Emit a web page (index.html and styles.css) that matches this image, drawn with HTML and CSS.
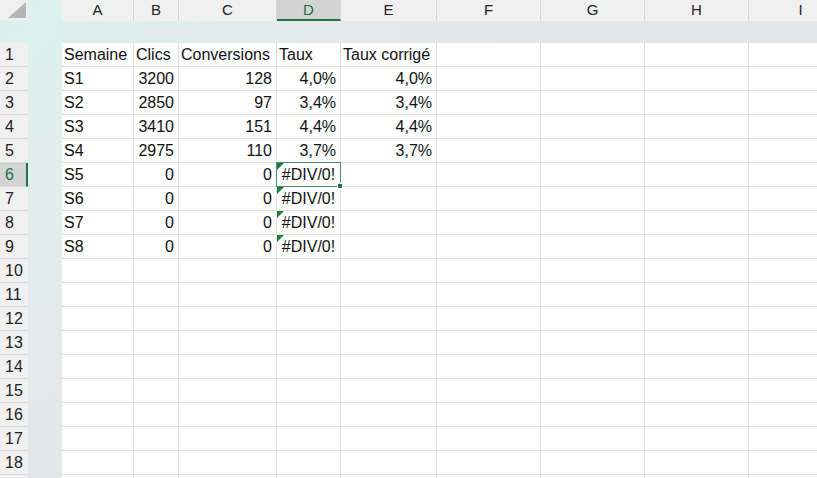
FILE: index.html
```html
<!DOCTYPE html>
<html lang="fr">
<head>
<meta charset="UTF-8">
<title>Feuil1</title>
<link rel="stylesheet" href="styles.css">
</head>
<body>

<div class="sheet">
    <!-- column letters -->
    <div class="row cols">
        <div class="corner">
            <svg width="28" height="20" viewBox="0 0 28 20"><polygon points="26,2 26,18 8,18" fill="#b4b4b4"/></svg>
        </div>
        <div class="gap"></div>
        <div class="ch">A</div>
        <div class="ch">B</div>
        <div class="ch">C</div>
        <div class="ch act">D</div>
        <div class="ch">E</div>
        <div class="ch">F</div>
        <div class="ch">G</div>
        <div class="ch">H</div>
        <div class="ch">I</div>
    </div>

    <div class="band"></div>

    <div class="row">
        <div class="rh">1</div><div class="gap"></div>
        <div class="cell">Semaine</div><div class="cell">Clics</div><div class="cell">Conversions</div><div class="cell">Taux</div><div class="cell">Taux corrigé</div>
        <div class="cell"></div><div class="cell"></div><div class="cell"></div><div class="cell"></div>
    </div>
    <div class="row">
        <div class="rh">2</div><div class="gap"></div>
        <div class="cell">S1</div><div class="cell num">3200</div><div class="cell num">128</div><div class="cell num">4,0%</div><div class="cell num">4,0%</div>
        <div class="cell"></div><div class="cell"></div><div class="cell"></div><div class="cell"></div>
    </div>
    <div class="row">
        <div class="rh">3</div><div class="gap"></div>
        <div class="cell">S2</div><div class="cell num">2850</div><div class="cell num">97</div><div class="cell num">3,4%</div><div class="cell num">3,4%</div>
        <div class="cell"></div><div class="cell"></div><div class="cell"></div><div class="cell"></div>
    </div>
    <div class="row">
        <div class="rh">4</div><div class="gap"></div>
        <div class="cell">S3</div><div class="cell num">3410</div><div class="cell num">151</div><div class="cell num">4,4%</div><div class="cell num">4,4%</div>
        <div class="cell"></div><div class="cell"></div><div class="cell"></div><div class="cell"></div>
    </div>
    <div class="row">
        <div class="rh">5</div><div class="gap"></div>
        <div class="cell">S4</div><div class="cell num">2975</div><div class="cell num">110</div><div class="cell num">3,7%</div><div class="cell num">3,7%</div>
        <div class="cell"></div><div class="cell"></div><div class="cell"></div><div class="cell"></div>
    </div>
    <div class="row">
        <div class="rh act">6</div><div class="gap"></div>
        <div class="cell">S5</div><div class="cell num">0</div><div class="cell num">0</div><div class="cell err sel">#DIV/0!<span class="fill"></span></div><div class="cell"></div>
        <div class="cell"></div><div class="cell"></div><div class="cell"></div><div class="cell"></div>
    </div>
    <div class="row">
        <div class="rh">7</div><div class="gap"></div>
        <div class="cell">S6</div><div class="cell num">0</div><div class="cell num">0</div><div class="cell err">#DIV/0!</div><div class="cell"></div>
        <div class="cell"></div><div class="cell"></div><div class="cell"></div><div class="cell"></div>
    </div>
    <div class="row">
        <div class="rh">8</div><div class="gap"></div>
        <div class="cell">S7</div><div class="cell num">0</div><div class="cell num">0</div><div class="cell err">#DIV/0!</div><div class="cell"></div>
        <div class="cell"></div><div class="cell"></div><div class="cell"></div><div class="cell"></div>
    </div>
    <div class="row">
        <div class="rh">9</div><div class="gap"></div>
        <div class="cell">S8</div><div class="cell num">0</div><div class="cell num">0</div><div class="cell err">#DIV/0!</div><div class="cell"></div>
        <div class="cell"></div><div class="cell"></div><div class="cell"></div><div class="cell"></div>
    </div>
    <div class="row">
        <div class="rh">10</div><div class="gap"></div>
        <div class="cell"></div><div class="cell"></div><div class="cell"></div><div class="cell"></div><div class="cell"></div>
        <div class="cell"></div><div class="cell"></div><div class="cell"></div><div class="cell"></div>
    </div>
    <div class="row">
        <div class="rh">11</div><div class="gap"></div>
        <div class="cell"></div><div class="cell"></div><div class="cell"></div><div class="cell"></div><div class="cell"></div>
        <div class="cell"></div><div class="cell"></div><div class="cell"></div><div class="cell"></div>
    </div>
    <div class="row">
        <div class="rh">12</div><div class="gap"></div>
        <div class="cell"></div><div class="cell"></div><div class="cell"></div><div class="cell"></div><div class="cell"></div>
        <div class="cell"></div><div class="cell"></div><div class="cell"></div><div class="cell"></div>
    </div>
    <div class="row">
        <div class="rh">13</div><div class="gap"></div>
        <div class="cell"></div><div class="cell"></div><div class="cell"></div><div class="cell"></div><div class="cell"></div>
        <div class="cell"></div><div class="cell"></div><div class="cell"></div><div class="cell"></div>
    </div>
    <div class="row">
        <div class="rh">14</div><div class="gap"></div>
        <div class="cell"></div><div class="cell"></div><div class="cell"></div><div class="cell"></div><div class="cell"></div>
        <div class="cell"></div><div class="cell"></div><div class="cell"></div><div class="cell"></div>
    </div>
    <div class="row">
        <div class="rh">15</div><div class="gap"></div>
        <div class="cell"></div><div class="cell"></div><div class="cell"></div><div class="cell"></div><div class="cell"></div>
        <div class="cell"></div><div class="cell"></div><div class="cell"></div><div class="cell"></div>
    </div>
    <div class="row">
        <div class="rh">16</div><div class="gap"></div>
        <div class="cell"></div><div class="cell"></div><div class="cell"></div><div class="cell"></div><div class="cell"></div>
        <div class="cell"></div><div class="cell"></div><div class="cell"></div><div class="cell"></div>
    </div>
    <div class="row">
        <div class="rh">17</div><div class="gap"></div>
        <div class="cell"></div><div class="cell"></div><div class="cell"></div><div class="cell"></div><div class="cell"></div>
        <div class="cell"></div><div class="cell"></div><div class="cell"></div><div class="cell"></div>
    </div>
    <div class="row">
        <div class="rh">18</div><div class="gap"></div>
        <div class="cell"></div><div class="cell"></div><div class="cell"></div><div class="cell"></div><div class="cell"></div>
        <div class="cell"></div><div class="cell"></div><div class="cell"></div><div class="cell"></div>
    </div>
    <div class="row">
        <div class="rh"></div><div class="gap"></div>
        <div class="cell"></div><div class="cell"></div><div class="cell"></div><div class="cell"></div><div class="cell"></div>
        <div class="cell"></div><div class="cell"></div><div class="cell"></div><div class="cell"></div>
    </div>
</div>

</body>
</html>
```

FILE: styles.css
```css
body {
    margin: 0;
    width: 817px;
    height: 478px;
    overflow: hidden;
    background: #fff;
    font-family: "Liberation Sans", Arial, sans-serif;
    font-size: 16px;
    color: #111;
}

.sheet {
    width: 853px;
    background: radial-gradient(circle at 0 0, #dcf0f0 0, #e1ecee 220px, #e4e5ea 520px);
}

.row {
    display: grid;
    grid-template-columns: 28px 34px 72px 45px 98px 64px 96px 104px 104px 104px 104px;
    height: 24px;
}

.cols {
    height: 20px;
}

.band {
    height: 23px;
}

.corner {
    background: #f0f0f0;
    height: 20px;
}

.corner svg {
    display: block;
}

/* column letters */
.ch {
    box-sizing: border-box;
    background: #f0f0f0;
    border-right: 1px solid #d6d6d6;
    text-align: center;
    font-size: 15px;
    line-height: 20px;
    color: #222;
}

.ch.act {
    background: #d3d3d3;
    color: #1d6b3c;
    border-bottom: 2px solid #217346;
    line-height: 19px;
}

/* row numbers */
.rh {
    box-sizing: border-box;
    background: #f0f0f0;
    border-bottom: 1px solid #dadada;
    padding-left: 5px;
    line-height: 23px;
    color: #222;
}

.rh.act {
    background: #d3d3d3;
    color: #217346;
    border-right: 2px solid #217346;
}

.cell {
    box-sizing: border-box;
    background: #fff;
    border-right: 1px solid #e1e1e1;
    border-bottom: 1px solid #e1e1e1;
    padding: 0 2px;
    line-height: 23px;
    white-space: nowrap;
    position: relative;
}

.num {
    text-align: right;
    padding-right: 4px;
}

.err {
    text-align: center;
    padding: 0;
}

/* error indicator */
.err::before {
    content: "";
    position: absolute;
    top: 0;
    left: 0;
    border-top: 7px solid #1e7b34;
    border-right: 7px solid transparent;
}

/* active cell */
.sel {
    z-index: 1;
}

.sel::after {
    content: "";
    position: absolute;
    top: -1px;
    left: -1px;
    right: -1px;
    bottom: -1px;
    border: 1px solid #4f9268;
    pointer-events: none;
}

.fill {
    position: absolute;
    right: -3px;
    bottom: -3px;
    width: 4px;
    height: 4px;
    background: #217346;
    border: 1px solid #fff;
    z-index: 2;
}
```
